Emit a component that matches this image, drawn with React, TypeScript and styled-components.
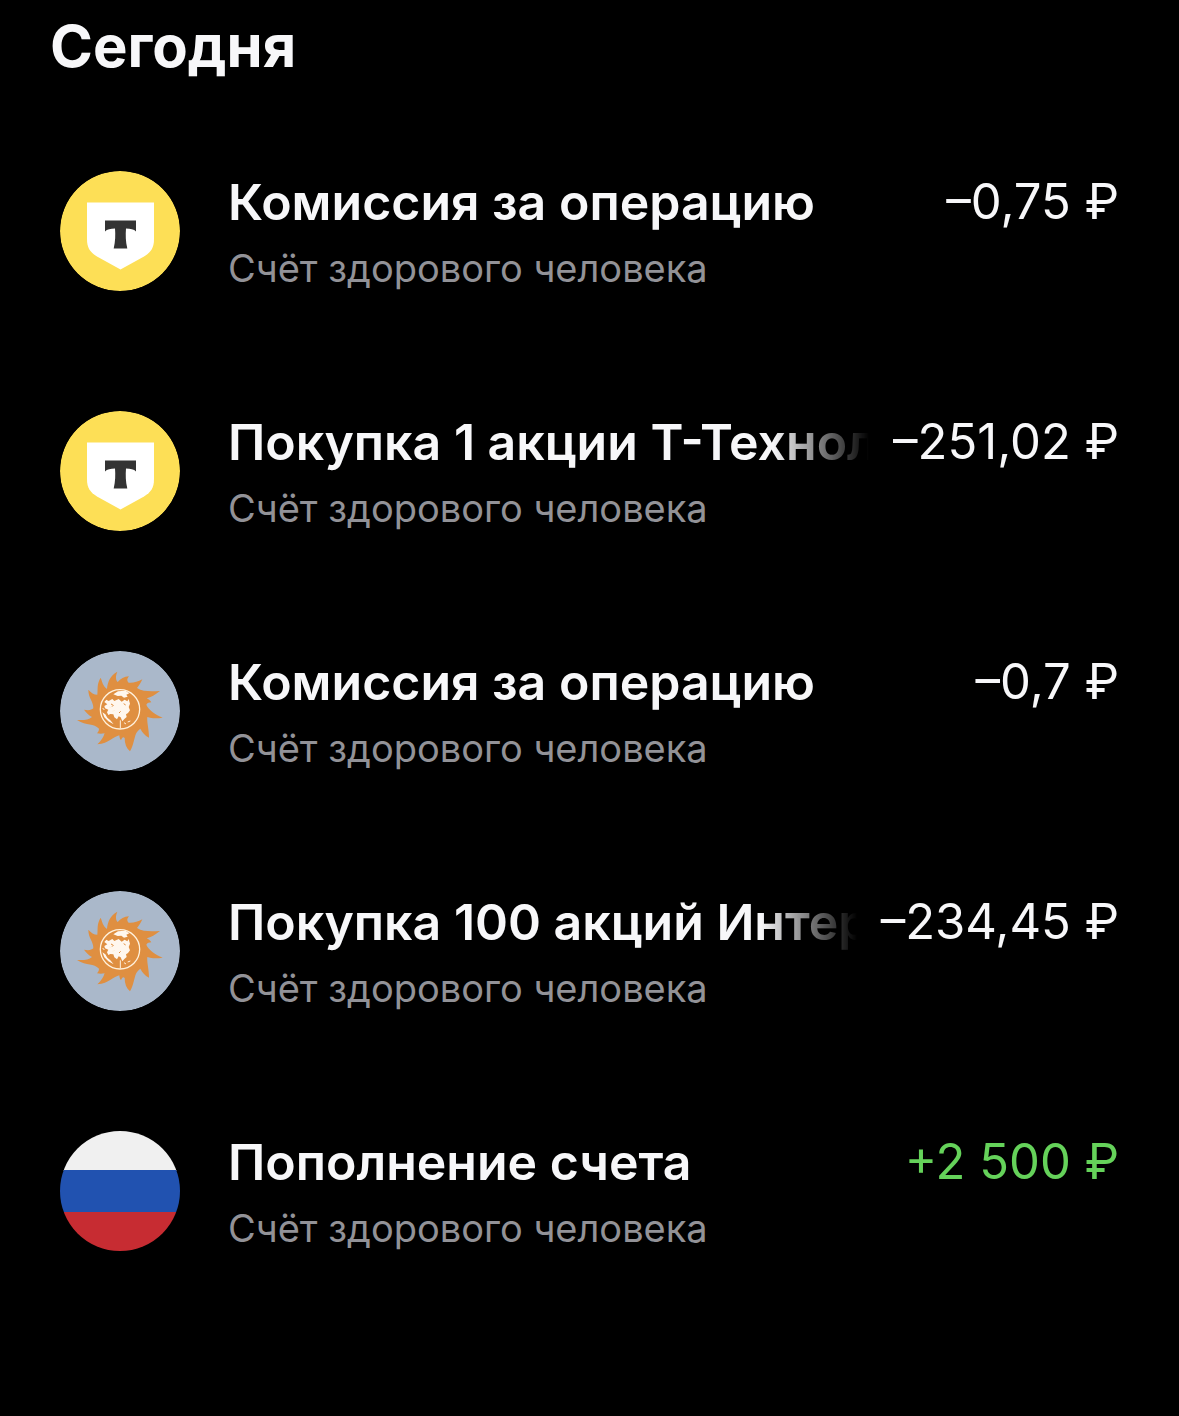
import React from "react";
import styled, { createGlobalStyle, css } from "styled-components";

type LogoKind = "bank" | "energy" | "flag";

interface Operation {
  id: number;
  logo: LogoKind;
  title: string;
  account: string;
  amount: string;
  faded?: boolean;
  income?: boolean;
}

interface OperationRowProps {
  operation: Operation;
}

const ACCOUNT = "Счёт здорового человека";

const operations: Operation[] = [
  { id: 1, logo: "bank", title: "Комиссия за операцию", account: ACCOUNT, amount: "–0,75 ₽" },
  { id: 2, logo: "bank", title: "Покупка 1 акции Т-Технол", account: ACCOUNT, amount: "–251,02 ₽", faded: true },
  { id: 3, logo: "energy", title: "Комиссия за операцию", account: ACCOUNT, amount: "–0,7 ₽" },
  { id: 4, logo: "energy", title: "Покупка 100 акций Интер", account: ACCOUNT, amount: "–234,45 ₽", faded: true },
  { id: 5, logo: "flag", title: "Пополнение счета", account: ACCOUNT, amount: "+2 500 ₽", income: true },
];

const App = () => {
  return (
    <>
      <GlobalStyle />
      <Page>
        <Heading>Сегодня</Heading>
        <OperationList>
          {operations.map((operation) => (
            <OperationRow key={operation.id} operation={operation} />
          ))}
        </OperationList>
      </Page>
    </>
  );
};

const OperationRow = (props: OperationRowProps) => {
  const { logo, title, account, amount, faded, income } = props.operation;
  const Logo = logos[logo];

  return (
    <Row>
      <Logo />
      <Details>
        <MainLine>
          <Title $faded={faded}>{title}</Title>
          <Amount $income={income}>{amount}</Amount>
        </MainLine>
        <Account>{account}</Account>
      </Details>
    </Row>
  );
};

const BankLogo = () => (
  <LogoSvg viewBox="0 0 120 120" aria-hidden="true">
    <circle cx="60" cy="60" r="60" fill="#fddf56" />
    <path d="M27 31.500H94V68C94 77 91 81 84 85.500L60.500 98.500L37 85.500C30 81 27 77 27 68Z" fill="#fff" />
    <path
      d="M45 49.500H76V60.500C74 58.300 70.500 57.500 66 57.500C65.500 64 65.600 70 67.300 77.500H53.700C55.400 70 55.500 64 55 57.500C50.500 57.500 47 58.300 45 60.500Z"
      fill="#333"
    />
  </LogoSvg>
);

const EnergyLogo = () => (
  <LogoSvg viewBox="30 32 360 360" aria-hidden="true">
    <circle cx="210" cy="212" r="180" fill="#aab8ca" />
    <path
      d="M171 146C173 123 181 106 202 94C196 108 197 118 203 125C212 115 222 109 237 108
      C230 116 231 122 236 127C250 128 263 125 277 117C272 130 266 136 261 143
      C280 155 305 153 330 152C316 163 303 171 290 174C296 177 301 181 304 186C297 186 292 188 289 193
      C297 211 316 222 338 232C319 235 304 234 292 230C290 244 297 267 297 292
      C284 285 277 276 271 265C266 269 261 273 258 280C253 291 251 314 240 333
      C229 324 224 310 224 293C220 289 216 291 213 300C209 295 208 289 208 285
      C191 288 177 310 142 312C156 299 160 290 164 279C156 281 149 281 141 279C145 275 147 270 147 265
      C131 248 111 258 81 239C104 240 116 238 126 230C117 225 109 218 102 208C116 211 125 209 130 204
      C131 184 115 174 115 148C123 157 132 163 142 163C144 144 140 131 152 112C157 124 158 136 171 146Z"
      fill="#df8f41"
    />
    <circle cx="210" cy="207" r="59" fill="#df8f41" stroke="#fff1dc" strokeWidth="4" />
    <path
      d="M190 162L204 153L226 151L238 159L229 163L233 169L222 172L214 166L203 167ZM163 185L169 178L176 182L187 176L193 182
      L206 176L215 184L224 178L232 183L236 176L240 190L236 200L240 210L234 218L228 222L230 230L223 236L217 243L212 231L206 228
      L201 237L193 231L190 222L181 221L175 224L171 216L175 208L165 204L163 197L172 192ZM157 216L166 222L172 232L181 240L191 252L175 243L163 231Z"
      fill="#fff7ee"
    />
    <path
      d="M177 199L184 203M187 213L195 210M211 240V264M222 247L228 251M233 245L241 242M158 203L163 209"
      stroke="#fff1dc"
      strokeWidth="3"
    />
    <path d="M183 191L190 195L186 199M207 218L212 213M221 190L227 194" fill="none" stroke="#df8f41" strokeWidth="3" />
  </LogoSvg>
);

const FlagLogo = () => (
  <LogoSvg viewBox="0 0 120 120" aria-hidden="true">
    <rect width="120" height="40" fill="#f0f0f0" />
    <rect y="39" width="120" height="42" fill="#2152b0" />
    <rect y="81" width="120" height="39" fill="#c72c32" />
  </LogoSvg>
);

const logos: Record<LogoKind, React.FC> = {
  bank: BankLogo,
  energy: EnergyLogo,
  flag: FlagLogo,
};

const GlobalStyle = createGlobalStyle`
  body {
    margin: 0;
    background: #000;
    color: #f7f7f9;
    font-family: Inter, "Liberation Sans", sans-serif;
  }
`;

const Page = styled.main`
  padding: 10px 60px 60px 50px;
`;

const Heading = styled.h1`
  margin: 0;
  font-size: 58px;
  font-weight: 700;
  line-height: 72px;
`;

const OperationList = styled.ul`
  display: flex;
  flex-direction: column;
  gap: 116px;
  margin: 0;
  padding: 89px 0 0 10px;
  list-style: none;
`;

const Row = styled.li`
  display: flex;
  align-items: flex-start;
  gap: 48px;
`;

const LogoSvg = styled.svg`
  flex: none;
  width: 120px;
  height: 120px;
  border-radius: 50%;
`;

const Details = styled.div`
  flex: 1;
  min-width: 0;
`;

const MainLine = styled.div`
  display: flex;
  gap: 24px;
`;

const Title = styled.span<{ $faded?: boolean }>`
  flex: 1;
  min-width: 0;
  overflow: hidden;
  font-size: 50px;
  font-weight: 600;
  line-height: 62px;
  white-space: nowrap;
  ${(props) =>
    props.$faded &&
    css`
      mask-image: linear-gradient(to right, #000 calc(100% - 96px), transparent);
    `}
`;

const Amount = styled.span<{ $income?: boolean }>`
  flex: none;
  color: ${(props) => (props.$income ? "#65d25a" : "#f7f7f9")};
  font-size: 49px;
  line-height: 62px;
  white-space: nowrap;
`;

const Account = styled.div`
  margin-top: 8px;
  color: #929297;
  font-size: 38px;
  line-height: 54px;
`;

export default App;
